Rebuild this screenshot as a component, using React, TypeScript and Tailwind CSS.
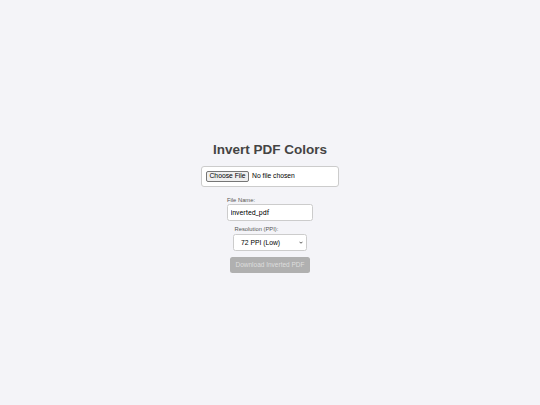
import { useState } from 'react';

export default function App() {
  const [fileName, setFileName] = useState('inverted_pdf');
  const [ppi, setPpi] = useState('72');

  return (
    <div className="min-h-screen bg-[#f4f4f8] font-['Liberation_Sans',Arial,sans-serif] text-[#333]">
      <div className="flex flex-col items-center pt-[142px]">
        <h1 className="text-[13.5px] leading-[16px] font-bold text-[#444]">Invert PDF Colors</h1>

        {/* File picker */}
        <label className="mt-[8px] w-[138px] h-[21px] flex items-center px-[4px] bg-white border border-[#ccc] rounded-[3px] cursor-pointer">
          <input type="file" accept="application/pdf" className="hidden" />
          <span className="h-[11px] flex items-center px-[2.5px] bg-[#efefef] border border-[#767676] rounded-[2px] text-[6.75px] leading-none text-black">
            Choose File
          </span>
          <span className="ml-[3px] text-[6.75px] leading-none text-black">No file chosen</span>
        </label>

        {/* File name */}
        <div className="mt-[9.5px] flex flex-col items-start">
          <label className="text-[5.8px] leading-[7px] text-[#555] mb-[0.5px]">File Name:</label>
          <input
            type="text"
            value={fileName}
            onChange={(e) => setFileName(e.target.value)}
            className="block w-[86px] h-[17px] px-[2.5px] bg-white border border-[#ccc] rounded-[2.5px] font-['Roboto',sans-serif] text-[7px] leading-[15px] text-black outline-none"
          />
        </div>

        {/* Resolution */}
        <div className="mt-[4.5px] flex flex-col items-start">
          <label className="text-[5.8px] leading-[7px] text-[#555] mb-[1.5px] pl-[1.5px]">Resolution (PPI):</label>
          <div className="relative">
            <select
              value={ppi}
              onChange={(e) => setPpi(e.target.value)}
              className="block appearance-none w-[74px] h-[17px] pl-[7px] bg-white border border-[#ccc] rounded-[2.5px] text-[6.75px] leading-[15px] text-black outline-none"
            >
              <option value="72">72 PPI (Low)</option>
              <option value="150">150 PPI (Medium)</option>
              <option value="300">300 PPI (High)</option>
            </select>
            <svg
              className="absolute right-[4px] top-[7px] w-[4px] h-[3px] pointer-events-none"
              viewBox="0 0 8 5"
              fill="none"
              stroke="#333"
              strokeWidth="1.6"
            >
              <path d="M1 1l3 3 3-3" />
            </svg>
          </div>
        </div>

        <button
          disabled
          className="mt-[6px] w-[80px] h-[16px] bg-[#b0b0b0] rounded-[2.5px] text-[6.5px] text-[#dedede] leading-none"
        >
          Download Inverted PDF
        </button>
      </div>
    </div>
  );
}
